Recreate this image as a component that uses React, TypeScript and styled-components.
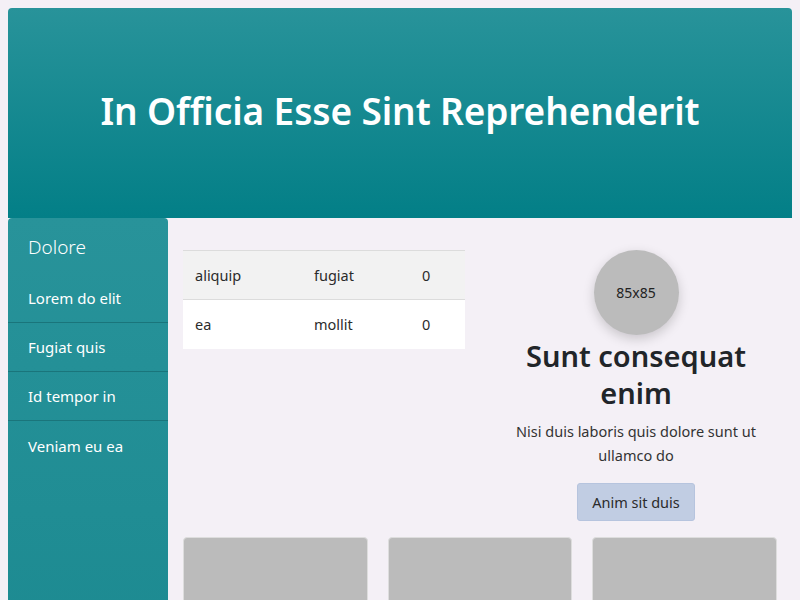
import React from "react";
import styled, { createGlobalStyle } from "styled-components";

const Global = createGlobalStyle`
  body {
    margin: 8px;
    background: #f4f0f6;
    font-family: "Noto Sans", "Open Sans", sans-serif;
    color: #212529;
  }
  * { box-sizing: border-box; }
`;

const Header = styled.header`
  height: 210px;
  border-radius: 4px 4px 0 0;
  background: linear-gradient(#28939a, #037f87);
  display: flex;
  align-items: center;
  justify-content: center;
  padding-bottom: 6px;
`;

const Title = styled.h1`
  margin: 0;
  color: #fff;
  font-size: 37px;
  font-weight: 600;
  letter-spacing: -0.1px;
`;

const Body = styled.div`
  display: flex;
  min-height: 400px;
`;

const Sidebar = styled.nav`
  width: 160px;
  flex-shrink: 0;
  border-radius: 4px 4px 0 0;
  background: linear-gradient(#28939a, #1c8a91);
  color: #fff;
  padding-top: 16px;
`;

const SideTitle = styled.div`
  font-size: 19px;
  font-weight: 300;
  padding: 0 20px;
  margin-bottom: 14px;
  line-height: 26px;
`;

const SideItem = styled.div<{ $last?: boolean }>`
  font-size: 15px;
  padding: 0 20px;
  height: 49px;
  border-bottom: ${(p) => (p.$last ? "none" : "1px solid #1a757b")};
  display: flex;
  align-items: center;
`;

const Main = styled.main`
  flex: 1;
  padding: 32px 15px 0;
  display: flex;
  flex-direction: column;
  gap: 16px;
`;

const TopRow = styled.div`
  display: grid;
  grid-template-columns: 1fr 1fr;
  gap: 30px;
`;

const Table = styled.table`
  border-collapse: collapse;
  width: 100%;
  align-self: start;
  font-size: 14.5px;
  color: #2b2b2b;
`;

const Row = styled.tr<{ $alt?: boolean }>`
  background: ${(p) => (p.$alt ? "#f2f2f2" : "#fff")};
  border-top: 1px solid #dcdcdc;
`;

const Cell = styled.td<{ $w?: number }>`
  padding: 0 12px;
  height: 49px;
  width: ${(p) => (p.$w ? `${p.$w}px` : "auto")};
`;

const Profile = styled.div`
  display: flex;
  flex-direction: column;
  align-items: center;
  text-align: center;
`;

const Avatar = styled.div`
  width: 85px;
  height: 85px;
  border-radius: 50%;
  background: #bbbbbb;
  display: flex;
  align-items: center;
  justify-content: center;
  font-size: 14px;
  color: #222;
  box-shadow: 0 4px 12px rgba(0, 0, 0, 0.18);
`;

const Name = styled.h2`
  margin: 2px 0 8px;
  font-size: 29px;
  font-weight: 600;
  line-height: 37px;
  color: #212529;
`;

const Bio = styled.p`
  margin: 0 0 16px;
  font-size: 14.5px;
  line-height: 24px;
  color: #333;
`;

const Button = styled.button`
  font-family: inherit;
  font-size: 14.5px;
  color: #2b2b2b;
  background: #c1cde3;
  border: 1px solid #b6c4de;
  border-radius: 3px;
  padding: 0 14px;
  height: 38px;
`;

const Cards = styled.div`
  display: grid;
  grid-template-columns: repeat(3, 1fr);
  gap: 20px;
`;

const Card = styled.div`
  height: 120px;
  background: #bbbbbb;
  border: 1px solid #dddddd;
  border-radius: 4px;
`;

const items = ["Lorem do elit", "Fugiat quis", "Id tempor in", "Veniam eu ea"];

export default function App() {
  return (
    <>
      <Global />
      <Header>
        <Title>In Officia Esse Sint Reprehenderit</Title>
      </Header>
      <Body>
        <Sidebar>
          <SideTitle>Dolore</SideTitle>
          {items.map((t, i) => (
            <SideItem key={t} $last={i === items.length - 1}>
              {t}
            </SideItem>
          ))}
        </Sidebar>
        <Main>
          <TopRow>
            <Table>
              <tbody>
                <Row $alt>
                  <Cell $w={119}>aliquip</Cell>
                  <Cell $w={108}>fugiat</Cell>
                  <Cell>0</Cell>
                </Row>
                <Row>
                  <Cell>ea</Cell>
                  <Cell>mollit</Cell>
                  <Cell>0</Cell>
                </Row>
              </tbody>
            </Table>
            <Profile>
              <Avatar>85x85</Avatar>
              <Name>
                Sunt consequat
                <br />
                enim
              </Name>
              <Bio>
                Nisi duis laboris quis dolore sunt ut
                <br />
                ullamco do
              </Bio>
              <Button>Anim sit duis</Button>
            </Profile>
          </TopRow>
          <Cards>
            <Card />
            <Card />
            <Card />
          </Cards>
        </Main>
      </Body>
    </>
  );
}
